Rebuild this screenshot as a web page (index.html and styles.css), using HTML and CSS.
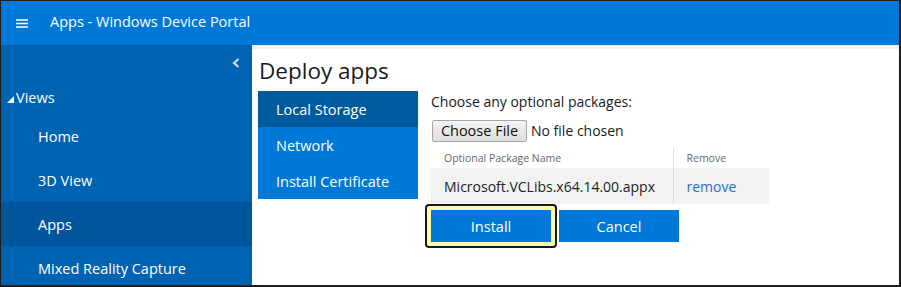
FILE: index.html
```html
<!DOCTYPE html>
<html>
<head>
<meta charset="utf-8">
<title>Apps - Windows Device Portal</title>
<link rel="stylesheet" href="styles.css">
</head>
<body>
<div class="frame">
  <header class="topbar">
    <svg class="hamburger" width="12" height="9" viewBox="0 0 12 9"><path d="M0 1h12M0 4.5h12M0 8h12" stroke="#fff" stroke-width="1.3"/></svg>
    <span class="app-title">Apps - Windows Device Portal</span>
  </header>
  <div class="content">
    <nav class="sidebar">
      <div class="collapse-row">
        <svg class="chevron" width="8" height="10" viewBox="0 0 8 10"><path d="M6.5 1 2 5l4.5 4" fill="none" stroke="#d3e2f2" stroke-width="2.2"/></svg>
      </div>
      <div class="group-head">
        <svg class="tri" width="7" height="7" viewBox="0 0 7 7"><path d="M7 0v7H0z" fill="#fff"/></svg><span>Views</span>
      </div>
      <a class="nav-item">Home</a>
      <a class="nav-item">3D View</a>
      <a class="nav-item active">Apps</a>
      <a class="nav-item">Mixed Reality Capture</a>
    </nav>
    <main class="main">
      <h1 class="page-title">Deploy apps</h1>
      <div class="deploy">
        <ul class="tabs">
          <li class="tab selected">Local Storage</li>
          <li class="tab">Network</li>
          <li class="tab">Install Certificate</li>
        </ul>
        <div class="panel">
          <div class="label">Choose any optional packages:</div>
          <div class="file-row"><span class="file-btn">Choose File</span><span class="file-none">No file chosen</span></div>
          <table class="pkg-table">
            <thead>
              <tr><th class="c1">Optional Package Name</th><th class="c2">Remove</th></tr>
            </thead>
            <tbody>
              <tr><td class="c1">Microsoft.VCLibs.x64.14.00.appx</td><td class="c2"><a class="link">remove</a></td></tr>
            </tbody>
          </table>
          <div class="actions">
            <span class="focus-ring"><span class="btn">Install</span></span>
            <span class="btn">Cancel</span>
          </div>
        </div>
      </div>
    </main>
  </div>
</div>
</body>
</html>
```

FILE: styles.css
```css
* { box-sizing: border-box; }
html, body { margin: 0; padding: 0; background: #fff; }
body { font-family: "Open Sans", "Noto Sans", sans-serif; }

.frame {
  width: 901px;
  height: 287px;
  border-style: solid;
  border-color: #1e1e1e;
  border-width: 1px 2px 2px 1px;
  display: flex;
  flex-direction: column;
  overflow: hidden;
}

.topbar {
  height: 44px;
  flex: 0 0 44px;
  background: #0078d7;
  display: flex;
  align-items: center;
  color: #fff;
}
.hamburger { margin-left: 15px; margin-top: 1px; }
.app-title { margin-left: 22px; font-size: 14.5px; margin-top: -4px; }

.content { flex: 1; display: flex; min-height: 0; }

.sidebar {
  width: 251px;
  flex: 0 0 251px;
  background: #0063b1;
  color: #fff;
  display: flex;
  flex-direction: column;
  overflow: hidden;
}
.collapse-row {
  height: 35px;
  flex: 0 0 35px;
  display: flex;
  justify-content: flex-end;
  align-items: center;
  padding-right: 12px;
}
.group-head {
  height: 34px;
  flex: 0 0 34px;
  display: flex;
  align-items: center;
  padding-left: 6px;
  font-size: 14.5px;
}
.group-head .tri { margin-top: 5px; margin-right: 2px; }
.nav-item {
  height: 44px;
  flex: 0 0 44px;
  display: flex;
  align-items: center;
  padding-left: 37px;
  font-size: 14.5px;
}
.nav-item.active { background: #00569c; }

.main {
  flex: 1;
  border-top: 4px solid #f0f0f0;
  padding: 0 6px;
  color: #1a1a1a;
}
.page-title {
  margin: 7px 0 0 1px;
  font-weight: normal;
  font-size: 22.5px;
  line-height: 30px;
  height: 35px;
}
.deploy { display: flex; gap: 13px; }
.tabs {
  list-style: none;
  margin: 0;
  padding: 0;
  width: 160px;
  flex: 0 0 160px;
  height: 108px;
}
.tab {
  height: 36px;
  display: flex;
  align-items: center;
  padding-left: 18px;
  background: #0078d7;
  color: #fff;
  font-size: 14.5px;
}
.tab.selected { background: #005a9e; }

.panel { width: 338px; }
.label {
  font-size: 14px;
  line-height: 18px;
  margin-top: 2px;
  height: 26px;
}
.file-row { display: flex; align-items: center; height: 23px; }
.file-btn {
  height: 22px;
  width: 95px;
  margin-left: 1px;
  border: 1px solid #a6a6a6;
  border-radius: 2px;
  background: linear-gradient(#f4f4f4, #dddddd);
  font-size: 14.5px;
  display: flex;
  align-items: center;
  justify-content: center;
  color: #111;
}
.file-none { margin-left: 4px; font-size: 14px; }

.pkg-table {
  margin-top: 6px;
  width: 338px;
  border-collapse: collapse;
}
.pkg-table th {
  height: 20px;
  padding: 0 0 0 13px;
  text-align: left;
  font-weight: normal;
  font-size: 10.5px;
  color: #666;
}
.pkg-table td {
  height: 36px;
  padding: 0 0 0 13px;
  background: #f2f2f2;
  font-size: 14px;
  color: #222;
}
.pkg-table .c1 { width: 242px; border-right: 1px solid #dcdcdc; }
.link { color: #2a6fbf; }

.actions {
  display: flex;
  align-items: center;
  margin-left: -6px;
  margin-top: 0;
  gap: 2px;
}
.focus-ring {
  display: inline-block;
  border: 2px solid #1a1a1a;
  border-radius: 4px;
  padding: 4px;
  background: #fffba8;
}
.btn {
  display: flex;
  align-items: center;
  justify-content: center;
  width: 120px;
  height: 32px;
  background: #0078d7;
  color: #fff;
  font-size: 14.5px;
}
```
